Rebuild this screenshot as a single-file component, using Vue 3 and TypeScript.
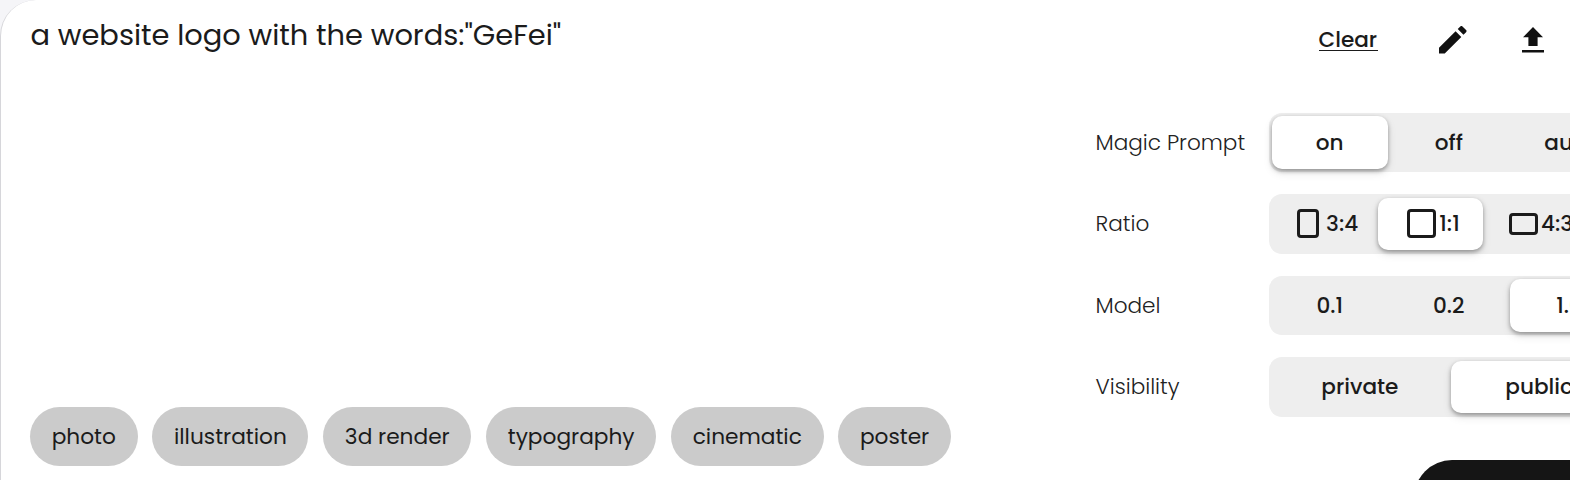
<script setup lang="ts">
interface Option { label: string; icon?: 'portrait' | 'square' | 'landscape' }
interface Setting { name: string; kind: string; selected: number; options: Option[] }

const tags = ['photo', 'illustration', '3d render', 'typography', 'cinematic', 'poster']

const settings: Setting[] = [
  { name: 'Magic Prompt', kind: 'thirds', selected: 0, options: [{ label: 'on' }, { label: 'off' }, { label: 'auto' }] },
  {
    name: 'Ratio', kind: 'ratio', selected: 1,
    options: [
      { label: '3:4', icon: 'portrait' },
      { label: '1:1', icon: 'square' },
      { label: '4:3', icon: 'landscape' },
    ],
  },
  { name: 'Model', kind: 'thirds', selected: 2, options: [{ label: '0.1' }, { label: '0.2' }, { label: '1.0' }] },
  { name: 'Visibility', kind: 'halves', selected: 1, options: [{ label: 'private' }, { label: 'public' }] },
]
</script>

<template>
  <div class="viewport">
    <div class="card">
      <section class="prompt">
        <p class="prompt-text">a website logo with the words:"GeFei"</p>
        <div class="tags">
          <button v-for="t in tags" :key="t" class="tag">{{ t }}</button>
        </div>
      </section>

      <aside class="panel">
        <div class="toolbar">
          <a class="clear">Clear</a>
          <svg class="edit" viewBox="3 3 18 18">
            <path d="M3 17.25V21h3.75L17.6 10.15l-3.75-3.75L3 17.25zM20.71 7.04a1 1 0 0 0 0-1.41l-2.34-2.34a1 1 0 0 0-1.41 0l-1.7 1.7 3.75 3.75 1.7-1.7z" />
          </svg>
          <svg class="upload" viewBox="0 0 22 26">
            <path d="M11 0 21 10.2h-5.4V19H6.4v-8.8H1zM0 22.9h22v2.5H0z" />
          </svg>
        </div>

        <div v-for="s in settings" :key="s.name" class="row">
          <span class="name">{{ s.name }}</span>
          <div class="segments" :class="s.kind">
            <button
              v-for="(o, i) in s.options"
              :key="o.label"
              class="segment"
              :class="[{ active: i === s.selected }, o.icon && 'with-' + o.icon]"
            >
              <i v-if="o.icon" class="frame" :class="o.icon"></i>
              <span>{{ o.label }}</span>
            </button>
          </div>
        </div>

        <button class="submit" aria-label="Generate"></button>
      </aside>
    </div>
  </div>
</template>

<style>
body { margin: 0; background: #fff; }
</style>

<style scoped>
.viewport {
  display: flex;
  width: 1570px;
  height: 480px;
  overflow: hidden;
  background: #f5f5f8;
  font-family: Poppins, Inter, "Liberation Sans", sans-serif;
  font-size: 21.6px;
  color: #1b1b1b;
}
.card {
  box-sizing: border-box;
  display: flex;
  flex: none;
  justify-content: space-between;
  width: 1660px;
  height: 560px;
  padding: 0 30px 0 29px;
  background: #fff;
  border-left: 1.5px solid #d6d6da;
  border-top-left-radius: 36px;
}
button {
  display: flex;
  align-items: center;
  padding: 0;
  border: 0;
  background: none;
  color: inherit;
  font: inherit;
  white-space: nowrap;
}
.prompt { display: flex; flex-direction: column; height: 465.5px; }
.prompt-text {
  margin: 17px 0 0 0.5px;
  font-size: 28.9px;
  line-height: 36px;
  white-space: nowrap;
}
.tags { display: flex; gap: 14.7px; margin-top: auto; }
.tag { height: 58.5px; padding: 0 21.7px; border-radius: 30px; background: #cbcbcb; font-size: 21.7px; }
.panel { display: flex; flex-direction: column; width: 533px; }
.toolbar { display: flex; align-items: flex-start; height: 112.5px; padding-left: 221.5px; }
.clear {
  width: 59px;
  height: 22px;
  margin-top: 28px;
  border-bottom: 1.5px solid #1b1b1b;
  font-weight: 500;
  line-height: 24px;
}
.edit { width: 27.5px; height: 27.5px; margin: 26px 0 0 61.5px; fill: #111; }
.upload { width: 22px; height: 26px; margin: 27px 0 0 55px; fill: #111; }
.row { display: flex; align-items: center; justify-content: space-between; height: 59.5px; margin-bottom: 22px; }
.name { margin: 1px 0 0 -1.5px; font-weight: 300; line-height: 30px; color: #222; }
.segments {
  box-sizing: border-box;
  display: grid;
  gap: 3.5px;
  width: 361px;
  height: 59.5px;
  padding: 3.5px 3px;
  border-radius: 13px;
  background: #eee;
}
.thirds { grid-template-columns: 115.5px 115.5px 119px; }
.halves { grid-template-columns: repeat(2, 1fr); }
.ratio { grid-template-columns: 102.5px 104.5px 104.5px; }
.segment { justify-content: center; border-radius: 10px; font-weight: 500; }
.with-portrait { justify-content: flex-start; padding-left: 21.6px; }
.with-landscape { justify-content: flex-start; padding-left: 22.6px; }
.with-square { justify-content: flex-start; padding-left: 28.8px; }
.active { background: #fff; box-shadow: 0 2px 4px rgba(0, 0, 0, 0.34), 0 4px 10px rgba(0, 0, 0, 0.1); }
.frame { box-sizing: border-box; flex: none; border: 3px solid #1b1b1b; border-radius: 4px; }
.portrait { width: 21.5px; height: 29px; margin: 0 7.5px 0 3.5px; }
.square { width: 29px; height: 29px; margin-right: 3.5px; }
.landscape { width: 29px; height: 22px; margin-right: 3.5px; }
.submit { width: 220px; height: 76px; margin: 21px 0 0 317px; flex: none; border-radius: 38px; background: #151515; }
</style>
